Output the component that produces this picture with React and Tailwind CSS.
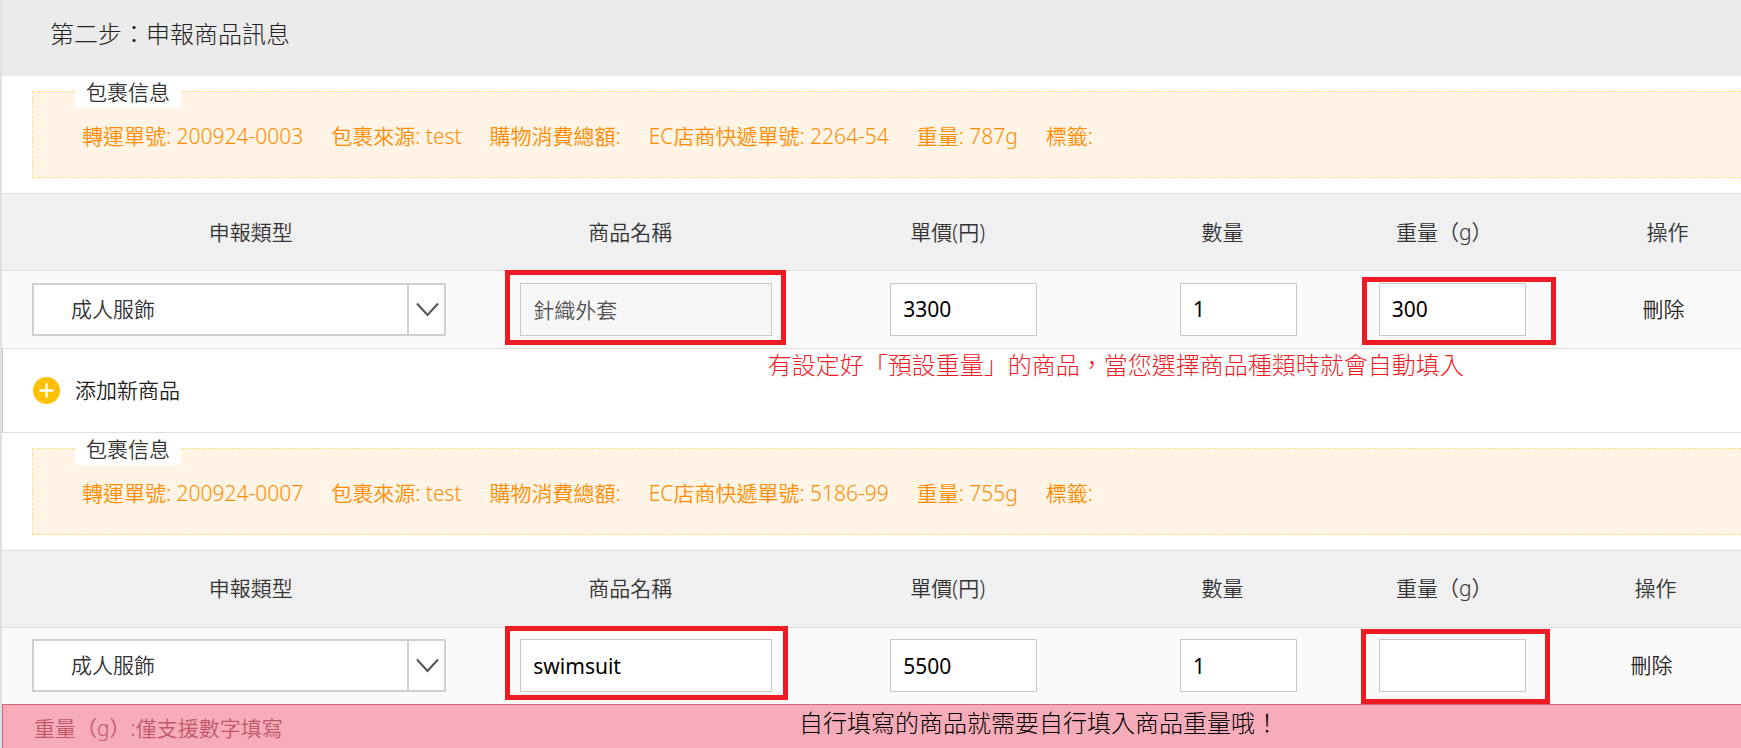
const packages = [
  {
    id: 'a',
    info: ['轉運單號: 200924-0003', '包裹來源: test', '購物消費總額:', 'EC店商快遞單號: 2264-54', '重量: 787g', '標籤:'],
    product: '針織外套',
    locked: true,
    price: '3300',
    quantity: '1',
    weight: '300',
    nameMark: 'w-[281px] h-[75px] -left-[15px] -top-[13px]',
    weightMark: 'w-[194px] h-[68px] -left-[17px] -top-[6px]',
    actionHead: 'pl-8',
    actionCell: 'pl-6',
  },
  {
    id: 'b',
    info: ['轉運單號: 200924-0007', '包裹來源: test', '購物消費總額:', 'EC店商快遞單號: 5186-99', '重量: 755g', '標籤:'],
    product: 'swimsuit',
    locked: false,
    price: '5500',
    quantity: '1',
    weight: '',
    nameMark: 'w-[283px] h-[74px] -left-[15px] -top-[13px]',
    weightMark: 'w-[189px] h-[75px] -left-[18px] -top-[10px]',
    actionHead: 'pl-2',
    actionCell: '',
  },
];

function Mark({ className }) {
  return <span className={`pointer-events-none absolute z-10 border-5 border-[#ed1c24] ${className}`} />;
}

function Field({ label, value, width, disabled }) {
  return (
    <input
      aria-label={label}
      defaultValue={value}
      disabled={disabled}
      className={`${width} block h-[53px] border border-[#c8c8c8] bg-white px-3 font-normal text-black outline-none disabled:bg-[#f7f7f7] disabled:font-[350] disabled:text-[#545454]`}
    />
  );
}

function PackageInfo({ items }) {
  return (
    <div className="py-[15px] pl-[30px]">
      <div className="relative flex h-[87px] items-center gap-7 border border-r-0 border-dashed border-[#ffdf86] bg-[#fff4e5] pt-1 pl-[49px] text-[#ff8c00]">
        <h2 className="absolute -top-[15px] left-[42px] bg-white px-[11px] text-[#333]">包裹信息</h2>
        {items.map((item) => (
          <span key={item} className="whitespace-nowrap">{item}</span>
        ))}
      </div>
    </div>
  );
}

function ItemTable({ pack }) {
  return (
    <table className="w-full table-fixed border-collapse text-center text-[#333]">
      <colgroup>
        <col className="w-[28.6%]" />
        <col className="w-[16.9%]" />
        <col className="w-[19.6%]" />
        <col className="w-[12%]" />
        <col className="w-[12.6%]" />
        <col />
      </colgroup>
      <thead>
        <tr className="h-[77px] border-t border-[#e0e0e0] bg-[#f0f0f0]">
          <th className="font-[350]">申報類型</th>
          <th className="pr-8 font-[350]">商品名稱</th>
          <th className="pr-8 font-[350]">單價(円)</th>
          <th className="pr-8 font-[350]">數量</th>
          <th className="pr-4 font-[350]">重量（g）</th>
          <th className={`font-[350] ${pack.actionHead}`}>操作</th>
        </tr>
      </thead>
      <tbody>
        <tr className="h-[77px] border-t border-[#e0e0e0] bg-[#fafafa]">
          <td className="pl-[30px]">
            <div className="relative w-[414px]">
              <select
                aria-label="申報類型"
                className="block h-[53px] w-full appearance-none border-2 border-[#d0d0d0] bg-white pr-12 pl-[37px] font-[350] text-[#333] outline-none"
              >
                <option>成人服飾</option>
              </select>
              <span className="pointer-events-none absolute inset-y-0 right-0 flex w-[39px] items-center border-l-2 border-[#d0d0d0] pl-[7px]">
                <svg width="23" height="15" viewBox="0 0 23 15" fill="none" stroke="#555" strokeWidth="2">
                  <path d="M1 1.5 11.5 13 22 1.5" />
                </svg>
              </span>
            </div>
          </td>
          <td>
            <div className="relative mx-auto w-[252px]">
              <Field label="商品名稱" value={pack.product} width="w-full" disabled={pack.locked} />
              <Mark className={pack.nameMark} />
            </div>
          </td>
          <td>
            <div className="flex justify-center">
              <Field label="單價(円)" value={pack.price} width="w-[147px]" />
            </div>
          </td>
          <td>
            <div className="flex justify-center">
              <Field label="數量" value={pack.quantity} width="w-[117px]" />
            </div>
          </td>
          <td>
            <div className="relative mx-auto w-[147px]">
              <Field label="重量（g）" value={pack.weight} width="w-full" />
              <Mark className={pack.weightMark} />
            </div>
          </td>
          <td className={pack.actionCell}>
            <button type="button" className="font-[350] text-[#222]">刪除</button>
          </td>
        </tr>
      </tbody>
    </table>
  );
}

export default function App() {
  const [first, second] = packages;
  return (
    <main
      lang="zh-Hant"
      className="overflow-hidden border-l-2 border-[#e0e0e0] bg-white font-['Noto_Sans','Noto_Sans_CJK_TC',sans-serif] text-[21px] leading-[31px] font-[350]"
    >
      <header className="flex h-[76px] items-center bg-[#ebebeb] pb-2 pl-12">
        <h1 className="text-2xl font-light text-[#222]">第二步：申報商品訊息</h1>
      </header>

      <section>
        <PackageInfo items={first.info} />
        <ItemTable pack={first} />
        <div className="relative flex h-[85px] items-center border-y border-l border-y-[#e0e0e0] border-l-[#c8c8c8] pl-[30px]">
          <button type="button" className="flex items-center gap-[15px] text-[#222]">
            <svg width="27" height="27" viewBox="0 0 27 27">
              <circle cx="13.5" cy="13.5" r="13.5" fill="#ffc000" />
              <path d="M13.5 6.5v14M6.5 13.5h14" stroke="#fff" strokeWidth="2.4" />
            </svg>
            添加新商品
          </button>
          <p className="absolute top-0 left-[44%] whitespace-nowrap text-2xl leading-[31px] font-light text-[#ed1c24]">
            有設定好「預設重量」的商品，當您選擇商品種類時就會自動填入
          </p>
        </div>
      </section>

      <section>
        <PackageInfo items={second.info} />
        <ItemTable pack={second} />
        <div className="relative border-t border-l border-[#d4667a] bg-[#f7adb9] pt-2 pb-1.5 pl-[31px] text-[#c0566a]">
          重量（g）:僅支援數字填寫
          <p className="absolute top-0.5 left-[45.8%] whitespace-nowrap text-2xl leading-[31px] font-light text-black">
            自行填寫的商品就需要自行填入商品重量哦！
          </p>
        </div>
      </section>
    </main>
  );
}
